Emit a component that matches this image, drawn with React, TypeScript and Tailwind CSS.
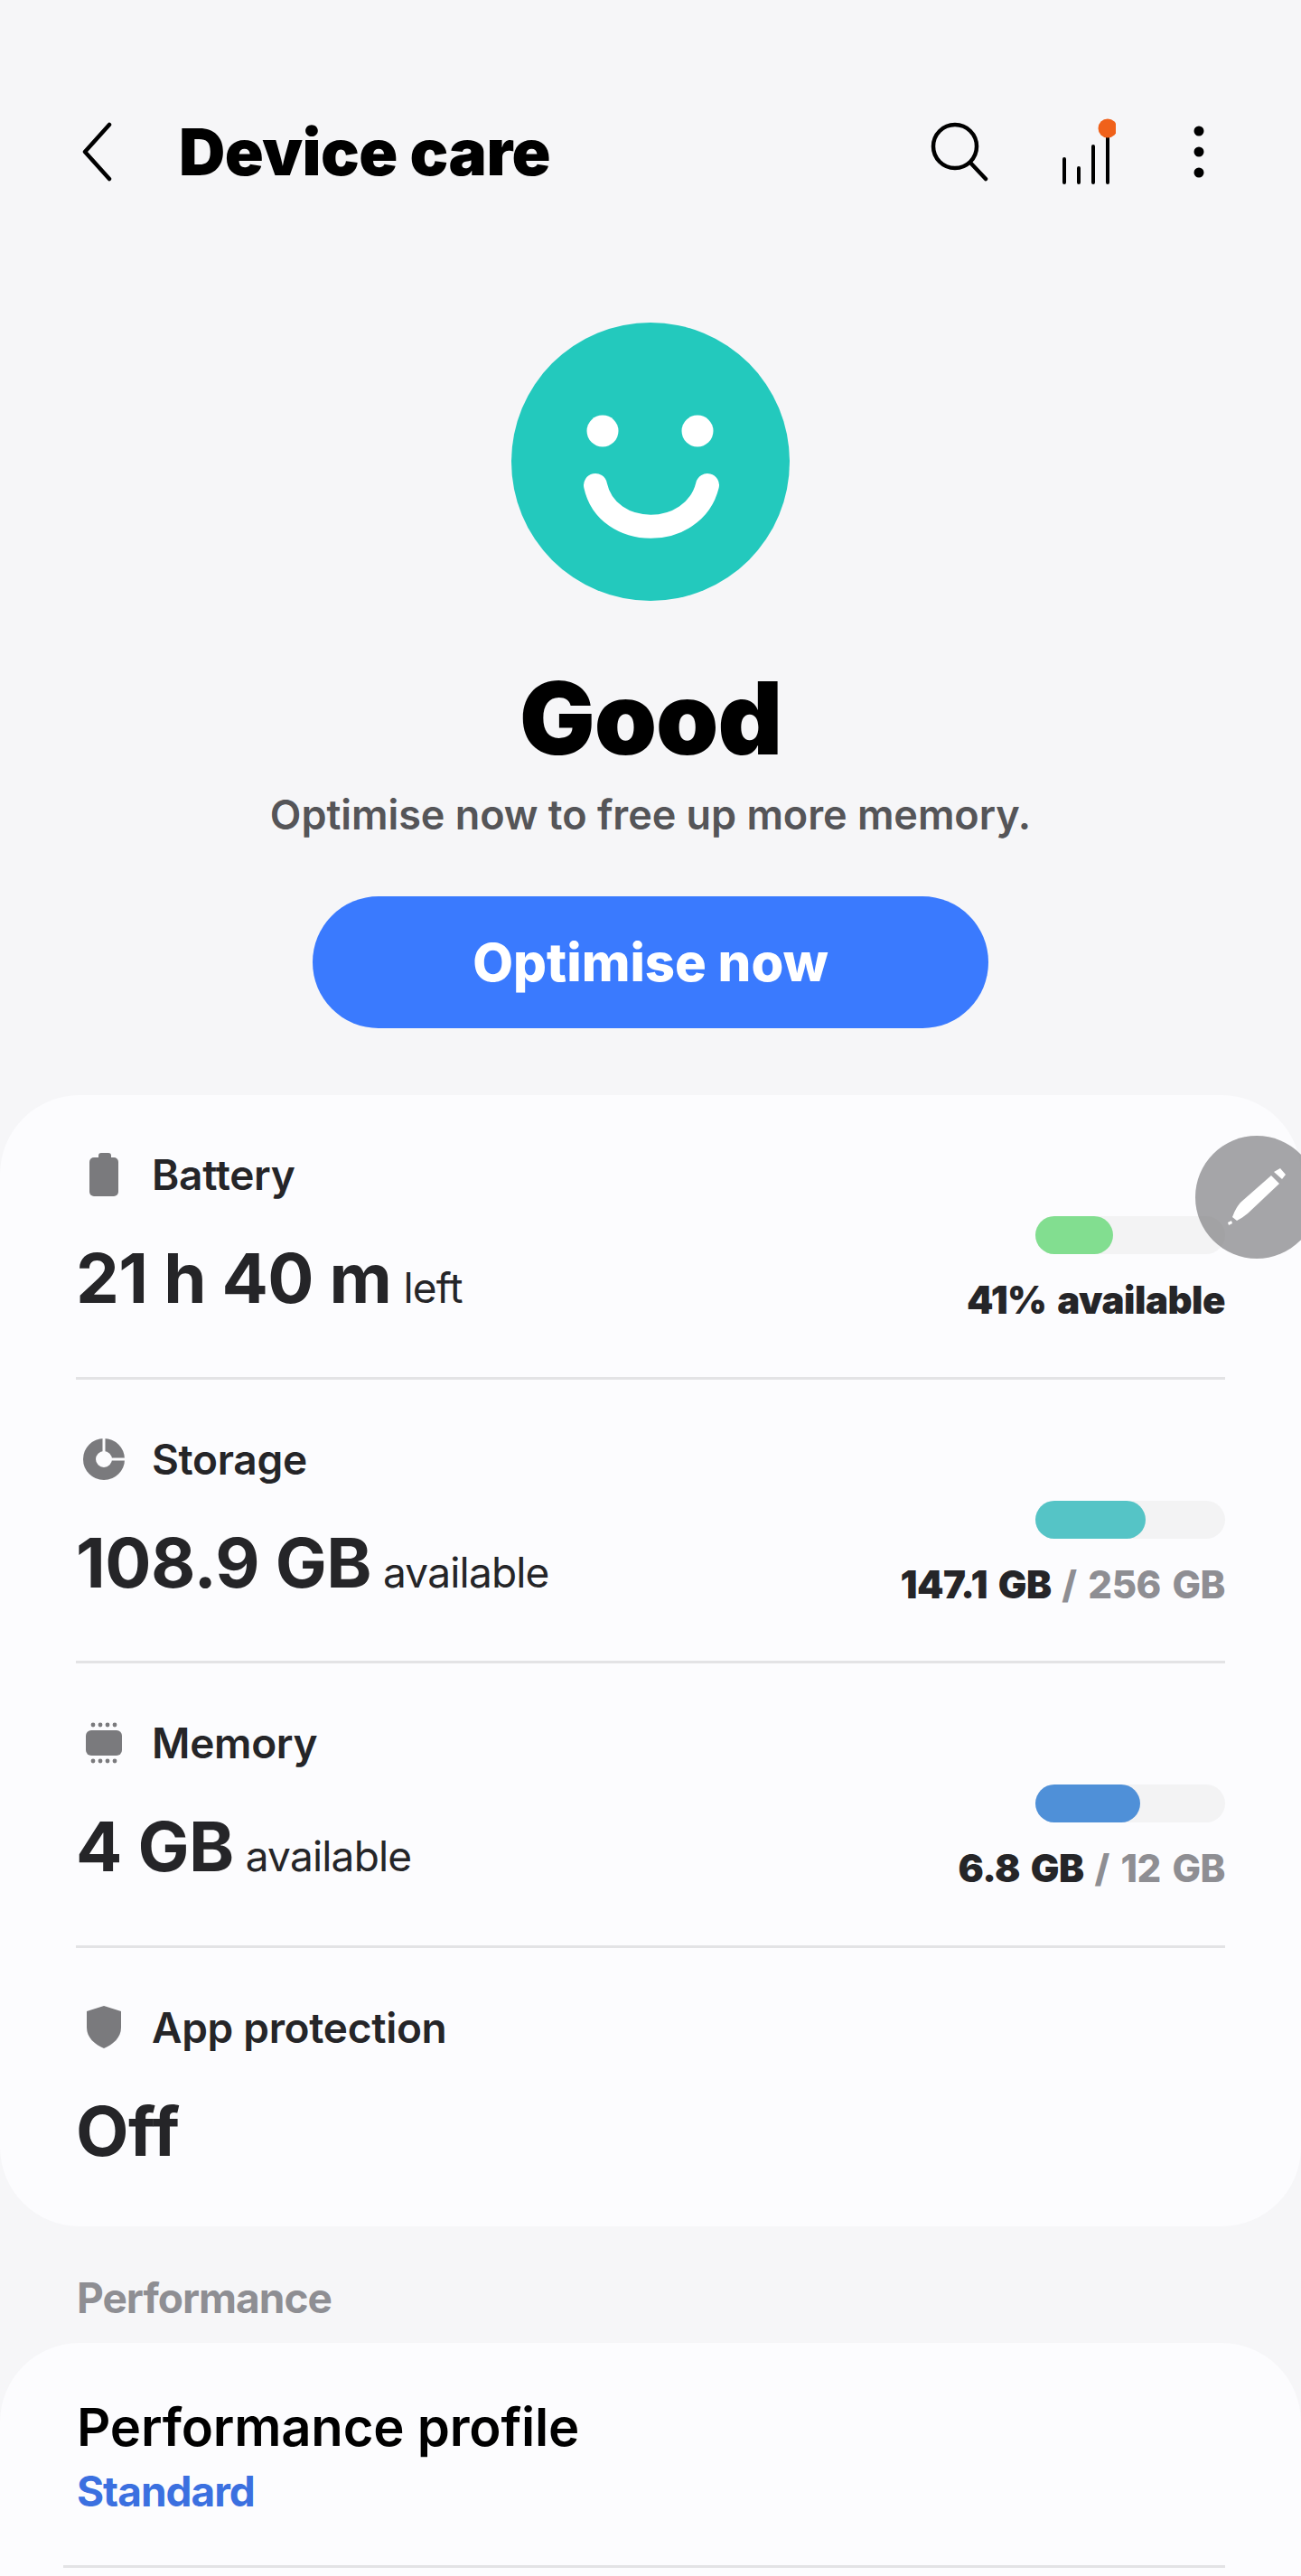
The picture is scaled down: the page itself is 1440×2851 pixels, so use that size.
import React from 'react'

const font = "font-['Inter','Noto_Sans',sans-serif]"

const BatteryIcon = () => (
  <svg width="46" height="48" viewBox="0 0 46 48" fill="#7a7a7d">
    <rect x="17" y="0" width="14" height="8" rx="3" />
    <rect x="7" y="5" width="32" height="43" rx="5" />
  </svg>
)

const StorageIcon = () => (
  <svg width="46" height="46" viewBox="0 0 46 46" fill="none">
    <circle cx="23" cy="23" r="16" stroke="#7a7a7d" strokeWidth="14" />
    <path d="M23 0v16M25 23h21" stroke="#fcfcfe" strokeWidth="3" />
  </svg>
)

const MemoryIcon = () => (
  <svg width="46" height="46" viewBox="0 0 46 46" fill="#7a7a7d">
    <rect x="3" y="9" width="40" height="28" rx="6" />
    {[12, 20, 28, 36].map((x) => (
      <g key={x}>
        <circle cx={x - 1} cy="3" r="2.4" />
        <circle cx={x - 1} cy="43" r="2.4" />
      </g>
    ))}
  </svg>
)

const ShieldIcon = () => (
  <svg width="46" height="48" viewBox="0 0 46 48" fill="#7a7a7d">
    <path d="M23 0L42 6V24C42 35 33 43 23 47C13 43 4 35 4 24V6Z" strokeLinejoin="round" />
  </svg>
)

type RowProps = {
  icon: React.ReactNode
  label: string
  value: string
  unit?: string
  barColor?: string
  barWidth?: string
  detail?: React.ReactNode
  last?: boolean
}

const Row = ({ icon, label, value, unit, barColor, barWidth, detail, last }: RowProps) => (
  <div className={last ? 'h-[309px]' : 'h-[314.5px] border-b-[3px] border-[#e3e3e5]'}>
    <div className="flex justify-between">
      <div className="pt-[60px]">
        <div className="flex items-center h-[56px]">
          <div className="w-[46px] ml-[8px] mr-[30px] flex justify-center">{icon}</div>
          <span className="text-[46px] leading-[56px] font-semibold text-[#252528] tracking-[-0.3px]">{label}</span>
        </div>
        <div className="mt-[41px] h-[90px] flex items-baseline text-[#252528]">
          <span className="text-[76px] leading-[90px] font-bold tracking-[-0.5px]">{value}</span>
          {unit && <span className="ml-[13px] text-[46px] font-normal tracking-[-0.8px]">{unit}</span>}
        </div>
      </div>
      {barColor && (
        <div className="pt-[134px] flex flex-col items-end">
          <div className="w-[210px] h-[42px] rounded-full bg-[#f3f3f4]">
            <div className={`h-full rounded-full ${barColor} ${barWidth}`} />
          </div>
          <div className="mt-[26px] text-[42px] leading-[50px] font-black text-[#252528] whitespace-pre tracking-[-0.5px] [word-spacing:4px]">{detail}</div>
        </div>
      )}
    </div>
  </div>
)

export default function App() {
  return (
    <div className={`relative w-[1440px] h-[2851px] overflow-hidden bg-[#f6f6f8] ${font}`}>
      {/* top bar */}
      <div className="pt-[132px] h-[357px] flex items-start pl-[87px] pr-[106px]">
        <div className="flex items-center h-[72px] w-full">
          <svg width="38" height="66" viewBox="0 0 38 66" fill="none" className="mr-[73px]">
            <path d="M34 3L7 33L34 63" stroke="#000" strokeWidth="4.5" strokeLinecap="round" strokeLinejoin="round" />
          </svg>
          <h1 className="text-[71px] leading-[72px] font-black text-black tracking-[-0.5px]">Device care</h1>
          <div className="ml-auto flex items-center">
            <svg width="64" height="66" viewBox="0 0 64 66" fill="none">
              <circle cx="27" cy="27" r="24" stroke="#000" strokeWidth="4.5" />
              <path d="M44 45L61 63" stroke="#000" strokeWidth="4.5" strokeLinecap="round" />
            </svg>
            <svg width="70" height="76" viewBox="0 0 70 76" fill="none" className="ml-[71px]">
              <path d="M13 72V46M29 72V56M45 72V32M61 72V10" stroke="#000" strokeWidth="4" strokeLinecap="round" />
              <circle cx="61" cy="12" r="10.5" fill="#f0611a" />
            </svg>
            <svg width="14" height="60" viewBox="0 0 14 60" fill="#000" className="ml-[85px]">
              <circle cx="7" cy="7" r="5.5" />
              <circle cx="7" cy="30" r="5.5" />
              <circle cx="7" cy="53" r="5.5" />
            </svg>
          </div>
        </div>
      </div>

      {/* status */}
      <div className="flex flex-col items-center">
        <svg width="308" height="308" viewBox="0 0 308 308">
          <circle cx="154" cy="154" r="154" fill="#23c9bd" />
          <circle cx="101" cy="120" r="17.5" fill="#fff" />
          <circle cx="206" cy="120" r="17.5" fill="#fff" />
          <path d="M93 180C106 241 202 241 217 180" fill="none" stroke="#fff" strokeWidth="26" strokeLinecap="round" />
        </svg>
        <div className="mt-[65px] text-[111px] leading-[130px] font-black text-black tracking-[-1px]">Good</div>
        <div className="mt-[14px] text-[45px] leading-[56px] font-semibold text-[#555558] tracking-[-0.05px]">Optimise now to free up more memory.</div>
        <button className="mt-[62px] w-[748px] h-[146px] rounded-full bg-[#3a7afe] text-white text-[58px] font-extrabold">Optimise now</button>
      </div>

      {/* main card */}
      <div className="mt-[74px] h-[1252px] rounded-[88px] bg-[#fcfcfe] px-[84px]">
        <Row icon={<BatteryIcon />} label="Battery" value="21 h 40 m" unit="left" barColor="bg-[#82de90]" barWidth="w-[86px]" detail="41% available" />
        <Row
          icon={<StorageIcon />}
          label="Storage"
          value="108.9 GB"
          unit="available"
          barColor="bg-[#55c4c6]"
          barWidth="w-[122px]"
          detail={<>147.1 GB <span className="text-[#8e8e93] font-extrabold">/ 256 GB</span></>}
        />
        <Row
          icon={<MemoryIcon />}
          label="Memory"
          value="4 GB"
          unit="available"
          barColor="bg-[#4f90d8]"
          barWidth="w-[116px]"
          detail={<>6.8 GB <span className="text-[#8e8e93] font-extrabold">/ 12 GB</span></>}
        />
        <Row icon={<ShieldIcon />} label="App protection" value="Off" last />
      </div>

      {/* floating edit button */}
      <div className="absolute left-[1323px] top-[1257px] w-[136px] h-[136px] rounded-full bg-[#77777a]/65 flex items-center justify-center">
        <svg width="66" height="64" viewBox="0 0 66 64" fill="#fff" className="-mt-[1px]">
          <path d="M1 60L5 58L6 61L2 63Z" />
          <path d="M6 54C9 46 12 41 16 37L49 8L58 17L23 50C19 53 15 56 11 58Z" />
          <path d="M52 4L59 0L65 7L61 12Z" />
        </svg>
      </div>

      {/* performance */}
      <div className="mt-[51px] px-[85px] text-[46px] leading-[56px] font-bold text-[#8e8e93] tracking-[-1px]">Performance</div>
      <div className="mt-[22px] rounded-t-[88px] bg-[#fcfcfe] h-[300px] pt-[59px]">
        <div className="px-[85px] text-[58px] leading-[68px] font-semibold text-black tracking-[-0.2px]">Performance profile</div>
        <div className="px-[85px] mt-[9px] text-[46px] leading-[56px] font-bold text-[#3b70e0] tracking-[-1px]">Standard</div>
        <div className="mt-[54px] ml-[70px] mr-[84px] border-b-[3px] border-[#e3e3e5]" />
      </div>
    </div>
  )
}
